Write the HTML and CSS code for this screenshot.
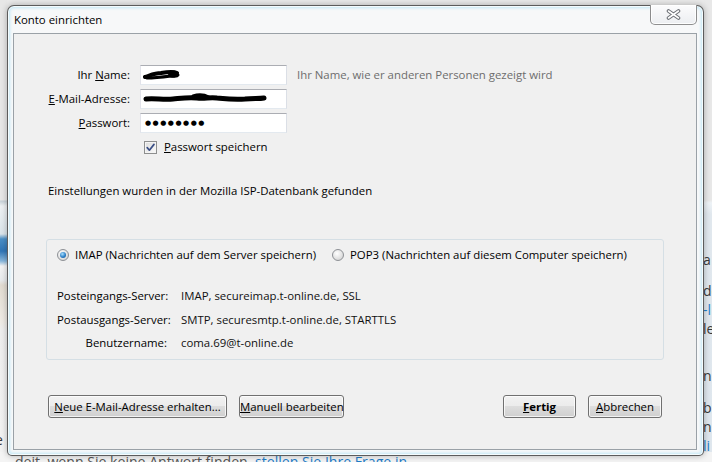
FILE: index.html
```html
<!DOCTYPE html>
<html lang="de">
<head>
<meta charset="utf-8">
<title>Konto einrichten</title>
<link rel="stylesheet" href="styles.css">
</head>
<body>
<div class="desktop">
  <div class="page">
    <div class="page-left"><p class="pl">e</p></div>
    <div class="page-center"></div>
    <div class="page-right">
      <p class="pr p1">a</p>
      <p class="pr p2">de<br><span class="lnk">-l</span><br>le</p>
      <p class="pr p3">n</p>
      <p class="pr p4">b<br>n<br><span class="lnk">li</span></p>
    </div>
    <p class="page-foot">deit, wenn Sie keine Antwort finden, <span class="lnk">stellen Sie Ihre Frage in</span></p>
  </div>

  <div class="window">
    <div class="titlebar">Konto einrichten</div>
    <div class="close" aria-label="Schließen">
      <svg width="15" height="11" viewBox="0 0 15 11">
        <path d="M2.5 2 L12.5 9 M12.5 2 L2.5 9" stroke="#6b6f75" stroke-width="3.6" stroke-linecap="round" fill="none"/>
        <path d="M2.5 2 L12.5 9 M12.5 2 L2.5 9" stroke="#ffffff" stroke-width="1.6" stroke-linecap="round" fill="none"/>
      </svg>
    </div>
    <div class="client">
      <div class="form">
        <label class="lbl">Ihr <u>N</u>ame:</label>
        <div class="field">
          <svg width="40" height="16" viewBox="0 0 40 16">
            <path d="M2 10 C8 8 12 6 18 6 C24 5 30 4 34 6" stroke="#000" stroke-width="4" stroke-linecap="round" fill="none"/>
            <path d="M4 11 C12 11 20 10 28 9 C31 9 34 10 35 8" stroke="#000" stroke-width="3" stroke-linecap="round" fill="none"/>
            <ellipse cx="30" cy="7" rx="5" ry="3.5" fill="#000"/>
          </svg>
        </div>
        <span class="hint">Ihr Name, wie er anderen Personen gezeigt wird</span>

        <label class="lbl"><u>E</u>-Mail-Adresse:</label>
        <div class="field">
          <svg width="126" height="16" viewBox="0 0 126 16">
            <path d="M3 8 C12 7 20 9 30 8 C40 7 46 6 54 7 C62 8 66 6 74 7 C84 8 92 9 102 8 C110 7 116 8 121 7" stroke="#000" stroke-width="5" stroke-linecap="round" fill="none"/>
            <path d="M50 5 C56 3 62 4 66 6" stroke="#000" stroke-width="3" stroke-linecap="round" fill="none"/>
          </svg>
        </div>
        <span></span>

        <label class="lbl"><u>P</u>asswort:</label>
        <div class="field"><span class="dots">●●●●●●●●</span></div>
        <span></span>

        <div class="check-row">
          <span class="checkbox">
            <svg width="11" height="11" viewBox="0 0 11 11"><path d="M2.2 5.6 L4.4 8.2 L9 2.4" stroke="#3b4f86" stroke-width="1.7" fill="none" stroke-linecap="round" stroke-linejoin="round"/></svg>
          </span>
          <span><u>P</u>asswort speichern</span>
        </div>
      </div>

      <p class="status">Einstellungen wurden in der Mozilla ISP-Datenbank gefunden</p>

      <div class="group">
        <div class="radios">
          <div class="radio-item imap"><span class="radio on"></span><span>IMAP (Nachrichten auf dem Server speichern)</span></div>
          <div class="radio-item"><span class="radio"></span><span>POP3 (Nachrichten auf diesem Computer speichern)</span></div>
        </div>
        <div class="info">
          <span class="k">Posteingangs-Server:</span><span class="v">IMAP, secureimap.t-online.de, SSL</span>
          <span class="k">Postausgangs-Server:</span><span class="v">SMTP, securesmtp.t-online.de, STARTTLS</span>
          <span class="k">Benutzername:</span><span class="v">coma.69@t-online.de</span>
        </div>
      </div>

      <div class="buttons">
        <div class="btn-group">
          <button class="btn w-neue"><u>N</u>eue E-Mail-Adresse erhalten...</button>
          <button class="btn w-man"><u>M</u>anuell bearbeiten</button>
        </div>
        <div class="btn-group">
          <button class="btn default w-fertig"><u>F</u>ertig</button>
          <button class="btn w-abb"><u>A</u>bbrechen</button>
        </div>
      </div>
    </div>
  </div>
</div>
</body>
</html>
```

FILE: styles.css
```css
* { box-sizing: border-box; }
html, body { margin: 0; padding: 0; }
body {
  width: 712px;
  height: 462px;
  overflow: hidden;
  font-family: "Open Sans", "Noto Sans", sans-serif;
  background: #ebebeb;
}
u { text-decoration: underline; text-underline-offset: 1px; }

.desktop {
  position: relative;
  width: 712px;
  height: 462px;
  overflow: hidden;
}

/* background page behind the dialog */
.page {
  display: grid;
  grid-template-columns: 7px 1fr 8px;
  grid-template-rows: 452px 10px;
  height: 462px;
}
.page-left {
  grid-column: 1;
  grid-row: 1;
  overflow: hidden;
  padding-top: 430px;
  font-size: 14px;
  line-height: 19px;
  color: #3a3a3a;
  background: linear-gradient(to bottom,
    #e7e7e7 0, #e7e7e7 200px, #c7d2d8 201px, #eef2f4 206px, #dbe5ea 234px,
    #4a8fc6 239px, #2f76b6 251px, #86b7dc 261px, #f3f4f4 266px,
    #e8ebed 280px, #e2dcd2 285px, #efebe5 322px, #eeeeee 330px, #f3f3f3 100%);
}
.pl { margin: 0 0 0 -5px; }
.page-center { grid-column: 2; grid-row: 1; background: #e9e9e9; }
.page-right {
  grid-column: 3;
  grid-row: 1;
  overflow: hidden;
  background: linear-gradient(to bottom, #e8e8e8 0, #e8e8e8 200px, #eef3f7 203px, #e1e8ee 214px, #dfe7ee 100%);
  padding-top: 250px;
  font-size: 14px;
  line-height: 19px;
  color: #3a3a3a;
  white-space: nowrap;
}
.pr { margin: 0 0 0 -1px; }
.p2 { margin-top: 12px; }
.p3 { margin-top: 28px; }
.p4 { margin-top: 13px; }
.lnk { color: #1f7dc8; }
.page-foot {
  grid-column: 1 / 4;
  grid-row: 2;
  margin: 0;
  padding-left: 15px;
  background: #f4f4f4;
  font-size: 14.1px;
  line-height: 19px;
  color: #555;
  white-space: nowrap;
  overflow: hidden;
}

/* dialog window */
.window {
  position: absolute;
  left: 7px;
  top: 5px;
  width: 697px;
  height: 451px;
  border: 1px solid rgba(25, 25, 25, 0.7);
  border-radius: 7px 7px 5px 5px;
  background: #f7f8f9;
  box-shadow: 0 0 6px rgba(0, 0, 0, 0.28),
    inset 0 0 0 1px rgba(255, 255, 255, 0.8),
    inset 0 0 3px 2px rgba(160, 222, 245, 0.6);
  padding: 0 6px 5px 5px;
  display: flex;
  flex-direction: column;
  font-size: 11.4px;
  color: #000;
}
.titlebar {
  height: 27px;
  line-height: 27px;
  padding-left: 1px;
  color: #000;
  white-space: nowrap;
}
.close {
  position: absolute;
  top: -1px;
  right: 6px;
  width: 47px;
  height: 20px;
  border: 1px solid rgba(70, 70, 70, 0.6);
  border-top: none;
  border-radius: 0 0 5px 5px;
  background: linear-gradient(#fcfcfd, #eceef1);
  box-shadow: inset 0 0 0 1px rgba(255, 255, 255, 0.9);
  display: flex;
  align-items: center;
  justify-content: center;
  padding-bottom: 1px;
}

.client {
  flex: 1;
  background: #f0f0f0;
  border: 1px solid #9aa1a7;
  padding: 31px 32px 0 32px;
  display: flex;
  flex-direction: column;
}

/* account form */
.form {
  margin-left: 2px;
  display: grid;
  grid-template-columns: 82px 147px 1fr;
  grid-template-rows: 20px 20px 20px auto;
  column-gap: 10px;
  row-gap: 4px;
}
.lbl {
  text-align: right;
  line-height: 20px;
  white-space: nowrap;
}
.field {
  height: 20px;
  background: #fff;
  border: 1px solid;
  border-color: #abadb3 #dbdfe6 #e3e9ef #e2e3ea;
  display: flex;
  align-items: center;
  padding-left: 2px;
  overflow: hidden;
}
.dots {
  font-family: "DejaVu Sans", sans-serif;
  font-size: 7px;
  letter-spacing: 1.5px;
  line-height: 10px;
  padding-left: 2px;
  color: #000;
}
.hint {
  color: #6d6d6d;
  line-height: 20px;
  white-space: nowrap;
}
.check-row {
  grid-column: 2 / 4;
  margin-top: 3px;
  padding-left: 4px;
  display: flex;
  align-items: center;
  gap: 7px;
  line-height: 14px;
  white-space: nowrap;
}
.checkbox {
  width: 13px;
  height: 13px;
  border: 1px solid #8e8f8f;
  background: linear-gradient(135deg, #dcdcdc, #fbfbfb);
  box-shadow: inset 0 0 0 1px #f4f4f4;
  display: flex;
  align-items: center;
  justify-content: center;
}

.status {
  margin: 29px 0 0 2px;
  line-height: 16px;
  white-space: nowrap;
}

/* server group */
.group {
  margin-top: 40px;
  height: 121px;
  border: 1px solid #d5dfe5;
  border-radius: 3px;
  padding: 7px 10px 0 10px;
}
.radios {
  display: flex;
  line-height: 16px;
  white-space: nowrap;
}
.radio-item {
  display: flex;
  align-items: center;
  gap: 6px;
}
.radio-item.imap { width: 275px; }
.radio {
  width: 12px;
  height: 12px;
  border-radius: 50%;
  border: 1px solid #8d9095;
  background: radial-gradient(circle at 40% 35%, #ffffff, #d6d6d6 80%);
  display: flex;
  align-items: center;
  justify-content: center;
}
.radio.on::after {
  content: "";
  width: 6px;
  height: 6px;
  border-radius: 50%;
  background: radial-gradient(circle at 40% 35%, #a8e0ff, #2c7fc7 55%, #0e4f92);
}
.info {
  margin-top: 25px;
  display: grid;
  grid-template-columns: 110px auto;
  column-gap: 14px;
  row-gap: 7.5px;
  line-height: 16px;
  white-space: nowrap;
}
.k { text-align: right; }
.v { color: #111; }

/* buttons */
.buttons {
  margin: 35px 2px 0;
  display: flex;
  justify-content: space-between;
}
.btn-group { display: flex; gap: 12px; }
.btn {
  height: 23px;
  padding: 0;
  font: inherit;
  color: #000;
  border: 1px solid #707070;
  border-radius: 3px;
  background: linear-gradient(#f2f2f2 0, #ebebeb 50%, #dddddd 50%, #cfcfcf 100%);
  box-shadow: inset 0 0 0 1px rgba(255, 255, 255, 0.75);
  white-space: nowrap;
}
.btn.default { font-weight: 700; }
.w-neue { width: 179px; }
.w-man { width: 105px; }
.w-fertig { width: 73px; }
.w-abb { width: 74px; }
```
